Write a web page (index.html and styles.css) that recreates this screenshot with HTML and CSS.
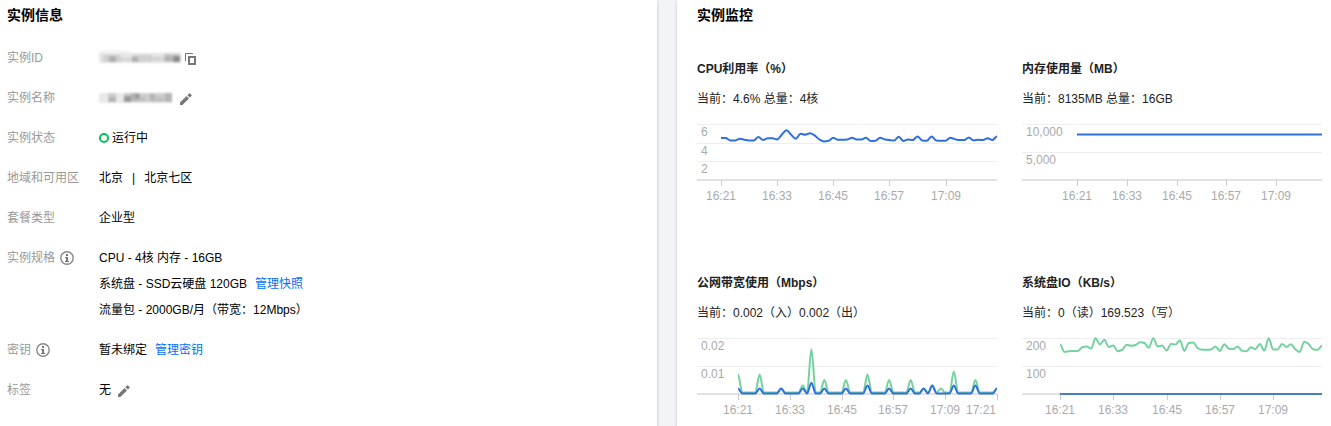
FILE: index.html
```
<!DOCTYPE html>
<html lang="zh-CN">
<head>
<meta charset="utf-8">
<meta name="viewport" content="width=device-width, initial-scale=1.0">
<title>实例信息</title>
<link rel="stylesheet" href="styles.css">
</head>
<body>
<div class="page">
    <section class="panel panel-info">
        <h2>实例信息</h2>
        <dl class="info">
            <dt>实例ID</dt>
            <dd>
                <svg class="mosaic" width="82" height="16" viewBox="0 0 82 16" aria-hidden="true">
                    <path fill="#f5f5f5" d="M0 1h30v4H0z"/>
                    <path fill="#e6e6e6" d="M0 4h82v10H0z"/>
                    <path fill="#d0d0d0" d="M4 6h18v7H4zM33 6h20v7H33zM65 4h16v9H65z"/>
                    <path fill="#b0b0b0" d="M10 7h7v6h-7zM33 8h6v5h-6zM66 7h7v5h-7z"/>
                    <path fill="#d4d4d4" d="M53 8h12v4H53zM22 9h11v3H22z"/>
                    <path fill="#8c8c8c" d="M74 7h7v6h-7z"/>
                </svg>
                <button class="icon-btn copy" type="button" aria-label="复制">
                    <svg width="11" height="12" viewBox="0 0 11 12"><path fill="none" stroke="#777" d="M.5 8V.5H8"/><path fill="none" stroke="#777" stroke-width="2" d="M4 4h6v7H4z"/></svg>
                </button>
            </dd>
            <dt>实例名称</dt>
            <dd>
                <svg class="mosaic" width="74" height="16" viewBox="0 0 74 16" aria-hidden="true">
                    <path fill="#e9e9e9" d="M0 4h73v10H0z"/>
                    <path fill="#cecece" d="M9 4h8v9H9zM25 4h48v9H25z"/>
                    <path fill="#b4b4b4" d="M10 8h7v5h-7zM32 4h9v8h-9zM51 5h5v7h-5zM66 4h7v9h-7z"/>
                    <path fill="#999" d="M25 7h7v6h-7zM36 5h4v4h-4z"/>
                    <path fill="#c0c0c0" d="M57 8h8v5h-8zM41 8h6v4h-6z"/>
                </svg>
                <button class="icon-btn edit" type="button" aria-label="编辑名称">
                    <svg width="12" height="12" viewBox="0 0 12 12"><path fill="#777" d="M0 9.6V12h2.4L9 5.4 6.600 3zM7.400 2.200L9.800 4.600l1.700-1.600a.7.7 0 0 0 0-1L10 .6a.7.7 0 0 0-1 0z"/></svg>
                </button>
            </dd>
            <dt>实例状态</dt>
            <dd><span class="status-dot"></span>运行中</dd>
            <dt>地域和可用区</dt>
            <dd>北京<span class="divider">|</span>北京七区</dd>
            <dt>套餐类型</dt>
            <dd>企业型</dd>
            <dt>实例规格
                <svg class="tip" width="14" height="14" viewBox="0 0 14 14"><circle cx="7" cy="7" r="6.200" fill="none" stroke="#888" stroke-width="1.400"/><path fill="#777" d="M6 3h2v2H6zM5 6h3v4h1v1H5v-1h1V7H5z"/></svg>
            </dt>
            <dd class="lines">
                <p>CPU - 4核 内存 - 16GB</p>
                <p>系统盘 - SSD云硬盘 120GB<a class="link" href="#">管理快照</a></p>
                <p>流量包 - 2000GB/月（带宽：12Mbps）</p>
            </dd>
            <dt>密钥
                <svg class="tip" width="14" height="14" viewBox="0 0 14 14"><circle cx="7" cy="7" r="6.200" fill="none" stroke="#888" stroke-width="1.400"/><path fill="#777" d="M6 3h2v2H6zM5 6h3v4h1v1H5v-1h1V7H5z"/></svg>
            </dt>
            <dd>暂未绑定<a class="link" href="#">管理密钥</a></dd>
            <dt>标签</dt>
            <dd>无
                <button class="icon-btn edit" type="button" aria-label="编辑标签">
                    <svg width="12" height="12" viewBox="0 0 12 12"><path fill="#777" d="M0 9.6V12h2.4L9 5.4 6.600 3zM7.400 2.200L9.800 4.600l1.700-1.600a.7.7 0 0 0 0-1L10 .6a.7.7 0 0 0-1 0z"/></svg>
                </button>
            </dd>
        </dl>
    </section>

    <section class="panel panel-monitor">
        <h2>实例监控</h2>
        <div class="charts">
            <div class="chart">
                <h3>CPU利用率（%）</h3>
                <p>当前：4.6% 总量：4核</p>
                <svg id="cpu" viewBox="0 0 301 90"></svg>
            </div>
            <div class="chart">
                <h3>内存使用量（MB）</h3>
                <p>当前：8135MB 总量：16GB</p>
                <svg id="memory" viewBox="0 0 301 90"></svg>
            </div>
            <div class="chart">
                <h3>公网带宽使用（Mbps）</h3>
                <p>当前：0.002（入）0.002（出）</p>
                <svg id="network" viewBox="0 0 301 90"></svg>
            </div>
            <div class="chart">
                <h3>系统盘IO（KB/s）</h3>
                <p>当前：0（读）169.523（写）</p>
                <svg id="disk" viewBox="0 0 301 90"></svg>
            </div>
        </div>
    </section>
</div>
<script src="charts.js"></script>
</body>
</html>
```
FILE: styles.css
```
* {
    box-sizing: border-box;
}

body, h2, h3, p, dl, dd {
    margin: 0;
}

body {
    background: #f2f4f8;
    color: #000;
    font: 12px/26px "Liberation Sans", "Noto Sans CJK SC", sans-serif;
}

.page {
    display: flex;
    gap: 20px;
    min-height: 100vh;
}

.panel {
    background: #fff;
    box-shadow: 0 2px 3px rgba(54, 58, 80, .3);
    padding-top: 5px;
}

.panel-info {
    flex: 1 1 657px;
    padding-left: 7px;
}

.panel-monitor {
    flex: 1 1 654px;
    padding-left: 20px;
    padding-right: 8px;
}

.panel h2 {
    font-size: 14px;
    line-height: 20px;
}

/* instance info */
.info {
    display: grid;
    grid-template-columns: 92px 1fr;
    row-gap: 14px;
    margin-top: 20px;
}

.info dt {
    display: flex;
    align-items: center;
    height: 26px;
    color: #999;
}

.info dd {
    display: flex;
    align-items: center;
}

.info .lines {
    display: block;
}

.mosaic {
    margin-bottom: 2px;
    filter: blur(1px);
}

.tip {
    margin-left: 5px;
}

.link {
    color: #006eff;
    text-decoration: none;
    margin-left: 8px;
}

.icon-btn {
    display: flex;
    margin-top: 2px;
    padding: 0;
    border: 0;
    background: none;
    cursor: pointer;
}

.copy {
    margin-left: 4px;
}

.edit {
    margin-left: 7px;
}

.status-dot {
    width: 10px;
    height: 10px;
    margin-right: 3px;
    border: 2px solid #0abf5b;
    border-radius: 50%;
}

.divider {
    margin: 0 9px;
}

/* monitor charts */
.charts {
    display: grid;
    grid-template-columns: 1fr 1fr;
    gap: 64px 24px;
    margin-top: 34px;
}

.chart h3 {
    font-size: 12px;
    line-height: 20px;
    color: #222;
}

.chart p {
    line-height: 20px;
    margin: 10px 0;
    color: #222;
}

.chart svg {
    display: block;
    width: 100%;
}

.chart text {
    fill: #aaa;
    font-size: 12px;
}

.grid-line {
    stroke: #eee;
}

.axis {
    stroke: #e2e2e2;
    stroke-width: 2;
}

.tick {
    stroke: #ccc;
}

.series {
    fill: none;
    stroke-width: 2;
    stroke-linejoin: round;
}

.blue {
    stroke: #2f6fe0;
}

.green {
    stroke: #75d2a0;
}

.steel {
    stroke: #4a7cc4;
}
```
FILE: charts.js
```
var TOP = 5, BASE = 61, RIGHT = 300;

function add(svg, name, attrs, text) {
    var el = document.createElementNS('http://www.w3.org/2000/svg', name);
    for (var key in attrs) {
        el.setAttribute(key, attrs[key]);
    }
    if (text) {
        el.textContent = text;
    }
    svg.appendChild(el);
}

// flat at peaks and valleys, so the curve never overshoots a value
function smooth(pts) {
    var n = pts.length;
    var m = pts.map(function (p, i) {
        if (i === 0 || i === n - 1) return 0;
        var a = p[1] - pts[i - 1][1], b = pts[i + 1][1] - p[1];
        return a * b <= 0 ? 0 : 2 * a * b / (a + b);
    });
    var d = 'M' + pts[0];
    for (var i = 1; i < n; i++) {
        var p = pts[i - 1], q = pts[i], t = (q[0] - p[0]) / 3;
        d += 'C' + [p[0] + t, p[1] + m[i - 1] / 3, q[0] - t, q[1] - m[i] / 3, q[0], q[1]];
    }
    return d;
}

function draw(id, opt) {
    var svg = document.getElementById(id);
    var step = (RIGHT - opt.left) / opt.minutes;

    opt.labels.forEach(function (label, i) {
        var y = Math.round(TOP + (BASE - TOP) * i / opt.labels.length);
        add(svg, 'line', {'class': 'grid-line', x1: 0, x2: RIGHT, y1: y + 0.5, y2: y + 0.5});
        add(svg, 'text', {x: 4, y: y + 12}, label);
    });
    add(svg, 'line', {'class': 'axis', x1: 0, x2: RIGHT, y1: BASE, y2: BASE});

    ['16:21', '16:33', '16:45', '16:57', '17:09', '17:21'].forEach(function (time, i) {
        if (i * 12 > opt.minutes) return;
        var x = Math.round(opt.left + step * 12 * i), last = i === 5;
        add(svg, 'line', {'class': 'tick', x1: x + 0.5, x2: x + 0.5, y1: BASE, y2: BASE + 6});
        add(svg, 'text', {x: last ? x - 1 : x, y: 81, 'text-anchor': last ? 'end' : 'middle'}, time);
    });

    opt.series.forEach(function (s) {
        var pts = s.data.map(function (v, i) {
            return [opt.left + step * i, BASE - (BASE - TOP) * v / opt.max];
        });
        add(svg, 'path', {'class': 'series ' + s.color, d: smooth(pts)});
    });
}

// 61 minutes at a base level with single peaks
function peaks(base, at) {
    var data = [];
    for (var i = 0; i <= 60; i++) {
        data.push(at[i] || base);
    }
    return data;
}

draw('cpu', {
    left: 24, minutes: 59, max: 6, labels: ['6', '4', '2'],
    series: [{color: 'blue', data: [
        4.5, 4.5, 4.24, 4.24, 4.42, 4.31, 4.24, 4.24, 4.6, 4.28, 4.46, 4.46, 4.35, 4.85, 5.32,
        4.85, 4.42, 4.96, 4.85, 5, 4.78, 4.35, 4.13, 4.2, 4.53, 4.31, 4.31, 4.35, 4.53, 4.35,
        4.35, 4.53, 4.17, 4.2, 4.53, 4.35, 4.28, 4.24, 4.64, 4.17, 4.35, 4.28, 4.67, 4.24, 4.2,
        4.67, 4.24, 4.2, 4.2, 4.53, 4.38, 4.28, 4.28, 4.56, 4.24, 4.31, 4.28, 4.46, 4.28, 4.67
    ]}]
});

draw('memory', {
    left: 55, minutes: 59, max: 10000, labels: ['10,000', '5,000'],
    series: [{color: 'blue', data: new Array(60).fill(8135)}]
});

draw('network', {
    left: 41, minutes: 60, max: 0.02, labels: ['0.02', '0.01'],
    series: [
        {color: 'green', data: peaks(0.0005, {
            0: 0.007, 5: 0.007, 10: 0.002, 15: 0.003, 17: 0.016, 20: 0.005, 25: 0.005, 30: 0.007,
            35: 0.005, 40: 0.005, 43: 0.002, 45: 0.003, 47: 0.002, 50: 0.008, 55: 0.005, 60: 0.002
        })},
        {color: 'blue', data: peaks(0.0002, {
            0: 0.002, 5: 0.002, 10: 0.002, 15: 0.002, 17: 0.004, 20: 0.002, 25: 0.002, 30: 0.003,
            35: 0.002, 40: 0.002, 43: 0.002, 45: 0.003, 50: 0.003, 55: 0.003, 60: 0.002
        })}
    ]
});

draw('disk', {
    left: 38, minutes: 59, max: 200, labels: ['200', '100'],
    series: [
        {color: 'green', data: [
            177, 150, 153, 154, 153, 167, 170, 162, 199, 177, 194, 168, 173, 153, 158,
            176, 172, 175, 185, 182, 165, 199, 170, 173, 155, 179, 177, 192, 154, 182,
            184, 164, 158, 158, 159, 170, 154, 178, 162, 161, 170, 154, 153, 167, 160,
            179, 155, 199, 159, 159, 179, 168, 178, 160, 150, 187, 178, 160, 158, 172
        ]},
        {color: 'steel', data: new Array(60).fill(0)}
    ]
});
```
